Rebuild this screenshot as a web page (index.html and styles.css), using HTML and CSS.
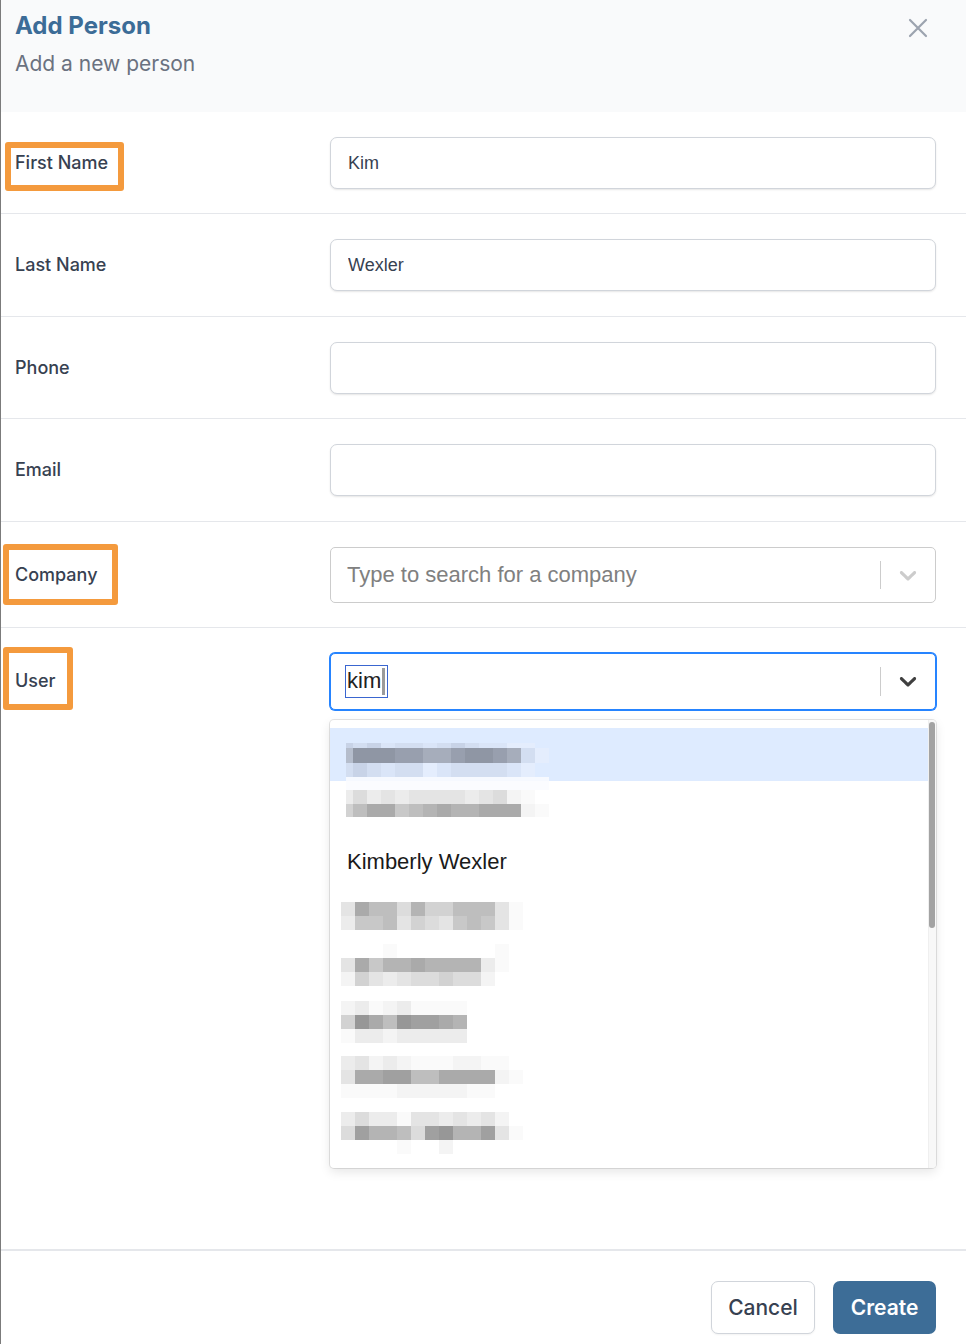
FILE: index.html
```html
<!DOCTYPE html>
<html lang="en">
<head>
<meta charset="utf-8">
<title>Add Person</title>
<link rel="stylesheet" href="styles.css">
</head>
<body>
<div class="modal">
  <header class="head">
    <div class="titles">
      <h1 class="title">Add Person</h1>
      <p class="subtitle">Add a new person</p>
    </div>
    <div class="close">
      <svg width="20" height="20" viewBox="0 0 20 20"><path d="M2 2 L18 18 M18 2 L2 18" stroke="#9ca3af" stroke-width="2.2" stroke-linecap="round" fill="none"/></svg>
    </div>
  </header>

  <form class="form">
    <div class="row">
      <span class="label hl hl-first">First Name</span>
      <input class="input" type="text" value="Kim">
    </div>
    <div class="row">
      <span class="label">Last Name</span>
      <input class="input" type="text" value="Wexler">
    </div>
    <div class="row">
      <span class="label">Phone</span>
      <input class="input" type="text" value="">
    </div>
    <div class="row">
      <span class="label">Email</span>
      <input class="input" type="text" value="">
    </div>
    <div class="row">
      <span class="label hl hl-company">Company</span>
      <div class="select">
        <div class="sel-value"><span class="placeholder">Type to search for a company</span></div>
        <span class="sel-sep"></span>
        <span class="sel-ind">
          <svg width="28" height="28" viewBox="0 0 20 20"><path fill="#cccccc" d="M4.516 7.548c0.436-0.446 1.043-0.481 1.576 0l3.908 3.747 3.908-3.747c0.533-0.481 1.141-0.446 1.574 0 0.436 0.445 0.408 1.197 0 1.615-0.406 0.418-4.695 4.502-4.695 4.502-0.217 0.223-0.502 0.335-0.787 0.335s-0.57-0.112-0.789-0.335c0 0-4.287-4.084-4.695-4.502s-0.436-1.17 0-1.615z"/></svg>
        </span>
      </div>
    </div>
    <div class="row row-user">
      <span class="label hl hl-user">User</span>
      <div class="sel-wrap">
        <div class="select select-focus">
          <div class="sel-value sel-value-input"><span class="typed">kim<span class="caret"></span></span></div>
          <span class="sel-sep"></span>
          <span class="sel-ind">
            <svg width="28" height="28" viewBox="0 0 20 20"><path fill="#3f3f3f" d="M4.516 7.548c0.436-0.446 1.043-0.481 1.576 0l3.908 3.747 3.908-3.747c0.533-0.481 1.141-0.446 1.574 0 0.436 0.445 0.408 1.197 0 1.615-0.406 0.418-4.695 4.502-4.695 4.502-0.217 0.223-0.502 0.335-0.787 0.335s-0.57-0.112-0.789-0.335c0 0-4.287-4.084-4.695-4.502s-0.436-1.17 0-1.615z"/></svg>
          </span>
        </div>
        <div class="menu">
          <div class="menu-list">
            <div class="opt opt-active">
              <div class="blur blur-a">
                <div class="br h5"><i class="hb u5"></i><i class="u6"></i><i class="u5"></i><i class="u7"></i><i class="u6"></i><i class="u6"></i><i class="u7"></i><i class="u6"></i><i class="u5"></i><i class="u6"></i><i class="u7"></i><i class="u7"></i><i class="u8"></i><i class="u8"></i></div>
                <div class="br h15"><i class="hb u4"></i><i class="u1"></i><i class="u1"></i><i class="u1"></i><i class="u2"></i><i class="u2"></i><i class="u3"></i><i class="u3"></i><i class="u2"></i><i class="u1"></i><i class="u1"></i><i class="u2"></i><i class="u3"></i><i class="u6"></i><i class="u8"></i></div>
                <div class="br"><i class="hb u6"></i><i class="u5"></i><i class="u6"></i><i class="u7"></i><i class="u6"></i><i class="u6"></i><i class="u8"></i><i class="u7"></i><i class="u6"></i><i class="u6"></i><i class="u6"></i><i class="u6"></i><i class="u7"></i><i class="u8"></i></div>
                <div class="br h4"><i class="hb u9"></i><i class="u9"></i><i class="u9"></i><i class="u9"></i><i class="u9"></i><i class="u9"></i><i class="u9"></i><i class="u9"></i><i class="u9"></i><i class="u9"></i><i class="u9"></i><i class="u9"></i><i class="u9"></i><i class="u9"></i><i class="u9"></i></div>
              </div>
            </div>
            <div class="opt">
              <div class="blur blur-a blur-top0">
                <div class="br h9"><i class="hb z"></i><i class="z"></i><i class="z"></i><i class="z"></i><i class="z"></i><i class="z"></i><i class="z"></i><i class="z"></i><i class="z"></i><i class="z"></i><i class="z"></i><i class="z"></i><i class="z"></i><i class="z"></i><i class="z"></i></div>
                <div class="br"><i class="hb g3"></i><i class="g5"></i><i class="g3"></i><i class="g4"></i><i class="g3"></i><i class="g4"></i><i class="g4"></i><i class="g4"></i><i class="g4"></i><i class="g3"></i><i class="g4"></i><i class="g5"></i><i class="g2"></i><i class="g1"></i></div>
                <div class="br h13"><i class="hb g6"></i><i class="g8"></i><i class="g10"></i><i class="g10"></i><i class="g7"></i><i class="g8"></i><i class="g9"></i><i class="g10"></i><i class="g9"></i><i class="g9"></i><i class="g10"></i><i class="g10"></i><i class="g10"></i><i class="g2"></i><i class="g1"></i></div>
              </div>
            </div>
            <div class="opt opt-text">Kimberly Wexler</div>
            <div class="opt">
              <div class="blur blur-b blur-top13">
                <div class="br"><i class="g4"></i><i class="g10"></i><i class="g8"></i><i class="g8"></i><i class="g5"></i><i class="g9"></i><i class="g6"></i><i class="g6"></i><i class="g8"></i><i class="g8"></i><i class="g8"></i><i class="g4"></i><i class="g1"></i></div>
                <div class="br"><i class="g3"></i><i class="g7"></i><i class="g7"></i><i class="g8"></i><i class="g4"></i><i class="g6"></i><i class="g5"></i><i class="g4"></i><i class="g7"></i><i class="g8"></i><i class="g7"></i><i class="g4"></i><i class="g1"></i></div>
              </div>
            </div>
            <div class="opt">
              <div class="blur blur-b blur-top1">
                <div class="br"><i class="w"></i><i class="w"></i><i class="w"></i><i class="g1"></i><i class="w"></i><i class="w"></i><i class="w"></i><i class="w"></i><i class="w"></i><i class="w"></i><i class="w"></i><i class="g1"></i></div>
                <div class="br"><i class="g4"></i><i class="g10"></i><i class="g7"></i><i class="g9"></i><i class="g9"></i><i class="g10"></i><i class="g9"></i><i class="g9"></i><i class="g9"></i><i class="g9"></i><i class="g3"></i><i class="g1"></i></div>
                <div class="br"><i class="g2"></i><i class="g6"></i><i class="g4"></i><i class="g3"></i><i class="g4"></i><i class="g5"></i><i class="g5"></i><i class="g6"></i><i class="g5"></i><i class="g5"></i><i class="g2"></i></div>
              </div>
            </div>
            <div class="opt">
              <div class="blur blur-b blur-top4">
                <div class="br"><i class="g2"></i><i class="g3"></i><i class="g1"></i><i class="g2"></i><i class="g3"></i><i class="g1"></i><i class="g1"></i><i class="g1"></i><i class="g1"></i></div>
                <div class="br"><i class="g6"></i><i class="g12"></i><i class="g10"></i><i class="g8"></i><i class="g12"></i><i class="g11"></i><i class="g11"></i><i class="g10"></i><i class="g9"></i></div>
                <div class="br"><i class="g1"></i><i class="g3"></i><i class="g3"></i><i class="g2"></i><i class="g3"></i><i class="g3"></i><i class="g3"></i><i class="g3"></i><i class="g3"></i></div>
              </div>
            </div>
            <div class="opt">
              <div class="blur blur-b blur-top5">
                <div class="br"><i class="g3"></i><i class="g4"></i><i class="g2"></i><i class="g3"></i><i class="g2"></i><i class="g1"></i><i class="g1"></i><i class="g1"></i><i class="g2"></i><i class="g2"></i><i class="g1"></i><i class="g1"></i></div>
                <div class="br"><i class="g4"></i><i class="g10"></i><i class="g10"></i><i class="g11"></i><i class="g11"></i><i class="g8"></i><i class="g8"></i><i class="g10"></i><i class="g10"></i><i class="g10"></i><i class="g10"></i><i class="g2"></i><i class="g1"></i></div>
                <div class="br"><i class="g1"></i><i class="g1"></i><i class="g1"></i><i class="g1"></i><i class="g2"></i><i class="g2"></i><i class="g2"></i><i class="g2"></i><i class="g2"></i><i class="g1"></i><i class="g1"></i></div>
              </div>
            </div>
            <div class="opt">
              <div class="blur blur-b blur-top7">
                <div class="br"><i class="g3"></i><i class="g5"></i><i class="g3"></i><i class="g3"></i><i class="g1"></i><i class="g4"></i><i class="g4"></i><i class="g3"></i><i class="g4"></i><i class="g3"></i><i class="g4"></i><i class="g2"></i></div>
                <div class="br"><i class="g5"></i><i class="g11"></i><i class="g9"></i><i class="g9"></i><i class="g8"></i><i class="g5"></i><i class="g11"></i><i class="g12"></i><i class="g9"></i><i class="g9"></i><i class="g11"></i><i class="g4"></i><i class="g1"></i></div>
                <div class="br"><i class="w"></i><i class="w"></i><i class="w"></i><i class="w"></i><i class="g1"></i><i class="w"></i><i class="w"></i><i class="g2"></i></div>
              </div>
            </div>
            <div class="opt"></div>
          </div>
          <div class="menu-track"><div class="menu-thumb"></div></div>
        </div>
      </div>
    </div>
  </form>

  <footer class="foot">
    <button class="btn btn-cancel" type="button">Cancel</button>
    <button class="btn btn-create" type="button">Create</button>
  </footer>
</div>
</body>
</html>
```

FILE: styles.css
```css
* { box-sizing: border-box; }
html, body { margin: 0; padding: 0; background: #ffffff; }
body { font-family: Inter, "Liberation Sans", sans-serif; }

.modal {
  width: 966px;
  height: 1344px;
  border-left: 1px solid #7b7b7b;
  display: flex;
  flex-direction: column;
  overflow: hidden;
}

/* header */
.head {
  height: 112px;
  flex: none;
  background: #f9fafb;
  display: flex;
  justify-content: space-between;
  align-items: flex-start;
  padding: 11px 38px 0 14px;
}
.title {
  margin: 0;
  font-size: 24px;
  line-height: 30px;
  font-weight: 700;
  color: #3c6c97;
}
.subtitle {
  margin: 9px 0 0;
  font-size: 21px;
  line-height: 28px;
  font-weight: 400;
  color: #6b7280;
}
.close { margin-top: 7px; width: 20px; height: 20px; }
.close svg { display: block; }

/* form rows */
.form { flex: 1; display: flex; flex-direction: column; }
.row {
  display: grid;
  grid-template-columns: 315px 606px;
  align-items: center;
  padding: 25px 0 24.4px 14px;
  border-bottom: 1px solid #e5e7eb;
}
.row-user { border-bottom: none; }

.label {
  position: relative;
  justify-self: start;
  font-size: 18px;
  line-height: 24px;
  font-weight: 500;
  color: #374151;
}
.hl::after {
  content: "";
  position: absolute;
  border: 6px solid #f49a3d;
  border-radius: 3px;
}
.hl-first::after { top: -9px; bottom: -16px; left: -10px; right: -16px; }
.hl-company::after { top: -19px; bottom: -18px; left: -12px; right: -20px; }
.hl-user::after { top: -22px; bottom: -17px; left: -12px; right: -17px; }

.input {
  display: block;
  width: 606px;
  height: 52px;
  margin: 0;
  border: 1px solid #d1d5db;
  border-radius: 7px;
  padding: 0 16px 0 17px;
  font-family: "Liberation Sans", Arial, sans-serif;
  font-size: 18px;
  color: #374151;
  background: #ffffff;
  box-shadow: 0 1px 2px rgba(0, 0, 0, 0.1);
  outline: none;
}

/* react-select like controls */
.sel-wrap { position: relative; }
.select {
  display: flex;
  align-items: center;
  height: 56px;
  border: 1px solid #cccccc;
  border-radius: 5px;
  background: #ffffff;
  font-family: "Liberation Sans", Arial, sans-serif;
  font-size: 22px;
}
.select-focus {
  height: 57px;
  border-color: #2684ff;
  box-shadow: 0 0 0 1px #2684ff;
}
.sel-value { flex: 1; padding-left: 16px; }
.sel-value-input { padding-left: 14px; }
.placeholder { color: #808080; }
.sel-sep {
  align-self: stretch;
  width: 1px;
  margin: 13px 0;
  background: #cccccc;
}
.sel-ind { display: flex; padding: 0 13px; }
.sel-ind svg { display: block; }

.typed {
  display: inline-flex;
  align-items: center;
  height: 33px;
  padding: 0 2px 0 1px;
  border: 1px solid #3a66d0;
  color: #222222;
}
.caret {
  display: inline-block;
  width: 3px;
  height: 27px;
  margin-left: 1px;
  background: #9b9b9b;
}

/* dropdown menu */
.menu {
  position: absolute;
  top: 67px;
  left: 0;
  right: 0;
  height: 448px;
  background: #ffffff;
  border-radius: 4px;
  box-shadow: 0 0 0 1px rgba(0, 0, 0, 0.1), 0 4px 11px rgba(0, 0, 0, 0.1);
  display: flex;
  overflow: hidden;
  z-index: 2;
}
.menu-list { flex: 1; padding-top: 8px; }
.menu-track {
  width: 8px;
  background: #f8f8f8;
  border-left: 1px solid #efefef;
  padding-top: 2px;
}
.menu-thumb {
  width: 6px;
  height: 206px;
  border-radius: 3px;
  background: #a3a3a3;
}

.opt { height: 54px; }
.opt-active { background: #deebff; height: 53px; }
.opt-text {
  display: flex;
  align-items: center;
  padding-left: 17px;
  font-family: "Liberation Sans", Arial, sans-serif;
  font-size: 22px;
  color: #1a1a1a;
}

/* pixelated (redacted) entries */
.blur { display: flex; flex-direction: column; padding-top: 15px; }
.blur-a { margin-left: 16px; }
.blur-b { margin-left: 11px; }
.blur-top0 { padding-top: 0; }
.blur-top1 { padding-top: 1px; }
.blur-top4 { padding-top: 4px; }
.blur-top5 { padding-top: 5px; }
.blur-top7 { padding-top: 7px; }
.blur-top13 { padding-top: 13px; }
.br { display: flex; height: 14px; }
.br.h4 { height: 4px; }
.br.h5 { height: 5px; }
.br.h9 { height: 9px; }
.br.h13 { height: 13px; }
.br.h15 { height: 15px; }
.br i { display: block; width: 14px; height: 100%; }
.br i.hb { width: 7px; }

.w { background: transparent; }
.z { background: #fbfcff; }
.g1 { background: #fafafa; }
.g2 { background: #f4f4f4; }
.g3 { background: #ececec; }
.g4 { background: #e4e4e4; }
.g5 { background: #dcdcdc; }
.g6 { background: #d2d2d2; }
.g7 { background: #c8c8c8; }
.g8 { background: #bebebe; }
.g9 { background: #b4b4b4; }
.g10 { background: #aaaaaa; }
.g11 { background: #a0a0a0; }
.g12 { background: #979797; }
.u1 { background: #8f96a4; }
.u2 { background: #989fae; }
.u3 { background: #a6adbb; }
.u4 { background: #b5bdcc; }
.u5 { background: #c8d3e7; }
.u6 { background: #d3def1; }
.u7 { background: #dae5f8; }
.u8 { background: #e4edfd; }
.u9 { background: #f6f9ff; }

/* footer */
.foot {
  flex: none;
  height: 95px;
  border-top: 2px solid #e5e7eb;
  padding: 30px 30px 0 0;
  display: flex;
  justify-content: flex-end;
  align-items: flex-start;
  gap: 18px;
}
.btn {
  height: 53px;
  margin: 0;
  padding: 0;
  border-radius: 7px;
  font-family: Inter, "Liberation Sans", sans-serif;
  font-size: 21px;
  cursor: pointer;
}
.btn-cancel {
  width: 104px;
  background: #ffffff;
  border: 1px solid #d1d5db;
  color: #374151;
  font-weight: 500;
  box-shadow: 0 1px 2px rgba(0, 0, 0, 0.05);
}
.btn-create {
  width: 103px;
  background: #3d6d97;
  border: none;
  color: #ffffff;
  font-weight: 600;
}
```
